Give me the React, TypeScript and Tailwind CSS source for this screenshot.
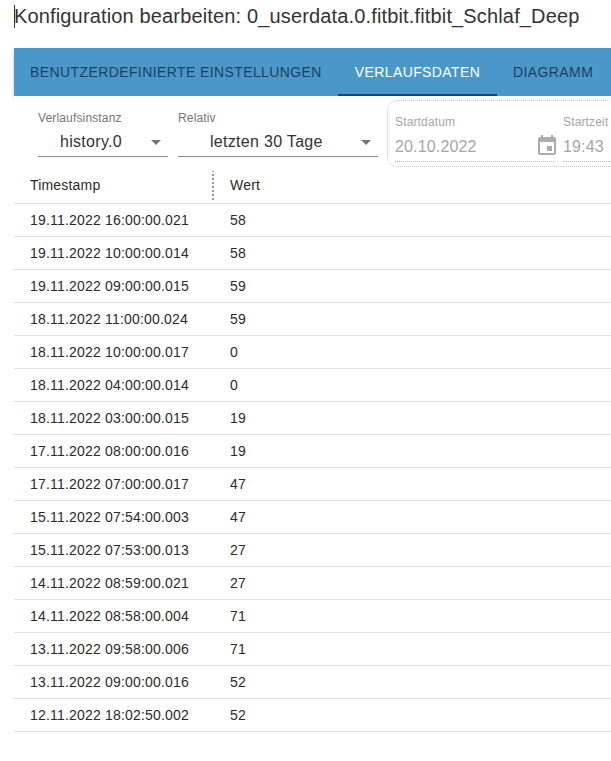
const rows: [string, string][] = [
  ["19.11.2022 16:00:00.021", "58"],
  ["19.11.2022 10:00:00.014", "58"],
  ["19.11.2022 09:00:00.015", "59"],
  ["18.11.2022 11:00:00.024", "59"],
  ["18.11.2022 10:00:00.017", "0"],
  ["18.11.2022 04:00:00.014", "0"],
  ["18.11.2022 03:00:00.015", "19"],
  ["17.11.2022 08:00:00.016", "19"],
  ["17.11.2022 07:00:00.017", "47"],
  ["15.11.2022 07:54:00.003", "47"],
  ["15.11.2022 07:53:00.013", "27"],
  ["14.11.2022 08:59:00.021", "27"],
  ["14.11.2022 08:58:00.004", "71"],
  ["13.11.2022 09:58:00.006", "71"],
  ["13.11.2022 09:00:00.016", "52"],
  ["12.11.2022 18:02:50.002", "52"],
];

function Caret() {
  return <span className="w-0 h-0 border-x-[5px] border-x-transparent border-t-[5px] border-t-[#757575]" />;
}

function SelectField({ label, value, width, textPad, caretPad }: { label: string; value: string; width: string; textPad: string; caretPad: string }) {
  return (
    <div className={`flex flex-col ${width}`}>
      <div className="text-[12px] leading-[14px] text-[#757575] tracking-[0.15px]">{label}</div>
      <div className={`mt-[3px] h-[29px] flex items-center justify-between border-b border-[#8c8c8c] ${textPad} ${caretPad}`}>
        <span className="text-[16px] text-[#333] tracking-[0.3px]">{value}</span>
        <Caret />
      </div>
    </div>
  );
}

export default function App() {
  return (
    <div className="w-[611px] h-[761px] overflow-hidden bg-white pl-[14px] font-['Liberation_Sans',Arial,sans-serif]">
      <div className="h-[48px] pt-[5px] flex items-start">
        <div className="w-px h-[23px] bg-[#333] -mr-px" />
        <div className="text-[20px] leading-[23px] text-[#333] whitespace-nowrap tracking-[0.15px]">Konfiguration bearbeiten: 0_userdata.0.fitbit.fitbit_Schlaf_Deep</div>
      </div>

      <div className="h-[48px] w-[597px] bg-[#4a98ca] flex shadow-[0_2px_4px_rgba(0,0,0,0.25)] relative whitespace-nowrap text-[14px] tracking-[0.4px]">
        <div className="px-4 w-[324px] flex items-center text-[#1f3f5f]">BENUTZERDEFINIERTE EINSTELLUNGEN</div>
        <div className="w-[159px] flex items-center justify-center text-white border-b-2 border-[#1d4477] pt-[2px]">VERLAUFSDATEN</div>
        <div className="px-4 flex items-center text-[#1f3f5f]">DIAGRAMM</div>
      </div>

      <div className="relative z-10 bg-white h-[75px] flex items-start w-[597px] overflow-hidden">
        <div className="pl-[24px] pt-[15px] flex gap-[10px]">
          <SelectField label="Verlaufsinstanz" value="history.0" width="w-[130px]" textPad="pl-[22px]" caretPad="pr-[7px]" />
          <SelectField label="Relativ" value="letzten 30 Tage" width="w-[200px]" textPad="pl-[32px]" caretPad="pr-[7px]" />
        </div>
        <div className="ml-[9px] mt-[4px] w-[300px] shrink-0 h-[67px] border border-dotted border-[#c4c4c4] rounded-[10px] pl-[7px] pt-[14px] flex">
          <div className="w-[159px] mr-[9px] shrink-0">
            <div className="text-[12px] leading-[14px] text-[#a6a6a6] tracking-[0.15px]">Startdatum</div>
            <div className="mt-[2px] h-[31px] w-[159px] flex items-center justify-between border-b border-dotted border-[#b5b5b5]">
              <span className="text-[16px] text-[#a6a6a6] tracking-[0.15px] pt-[2px]">20.10.2022</span>
              <svg width="24" height="24" viewBox="0 0 24 24" fill="#ababab" className="-mr-[5px]">
                <path d="M17 12h-5v5h5v-5zM16 1v2H8V1H6v2H5c-1.11 0-1.99.9-1.99 2L3 19c0 1.1.89 2 2 2h14c1.1 0 2-.9 2-2V5c0-1.1-.9-2-2-2h-1V1h-2zm3 18H5V8h14v11z" />
              </svg>
            </div>
          </div>
          <div className="w-[100px] shrink-0">
            <div className="text-[12px] leading-[14px] text-[#a6a6a6] tracking-[0.15px]">Startzeit</div>
            <div className="mt-[2px] h-[31px] flex items-center border-b border-dotted border-[#b5b5b5]">
              <span className="text-[16px] text-[#a6a6a6] tracking-[0.15px] pt-[2px]">19:43</span>
            </div>
          </div>
        </div>
      </div>

      <div className="w-[597px] text-[14px] tracking-[0.19px] text-[#2b2b2b]">
        <div className="h-[33px] flex items-center border-b border-[#e0e0e0]">
          <div className="w-[198px] pl-[16px] relative h-full flex items-center pb-[4px]">
            Timestamp
            <span className="absolute right-[-2px] top-[-1px] h-[30px] border-l-2 border-dotted border-[#999]" />
          </div>
          <div className="pl-[18px] pb-[4px]">Wert</div>
        </div>
        {rows.map(([t, v]) => (
          <div key={t} className="h-[33px] flex items-center border-b border-[#e0e0e0]">
            <div className="w-[198px] pl-[16px]">{t}</div>
            <div className="pl-[18px]">{v}</div>
          </div>
        ))}
      </div>
    </div>
  );
}
